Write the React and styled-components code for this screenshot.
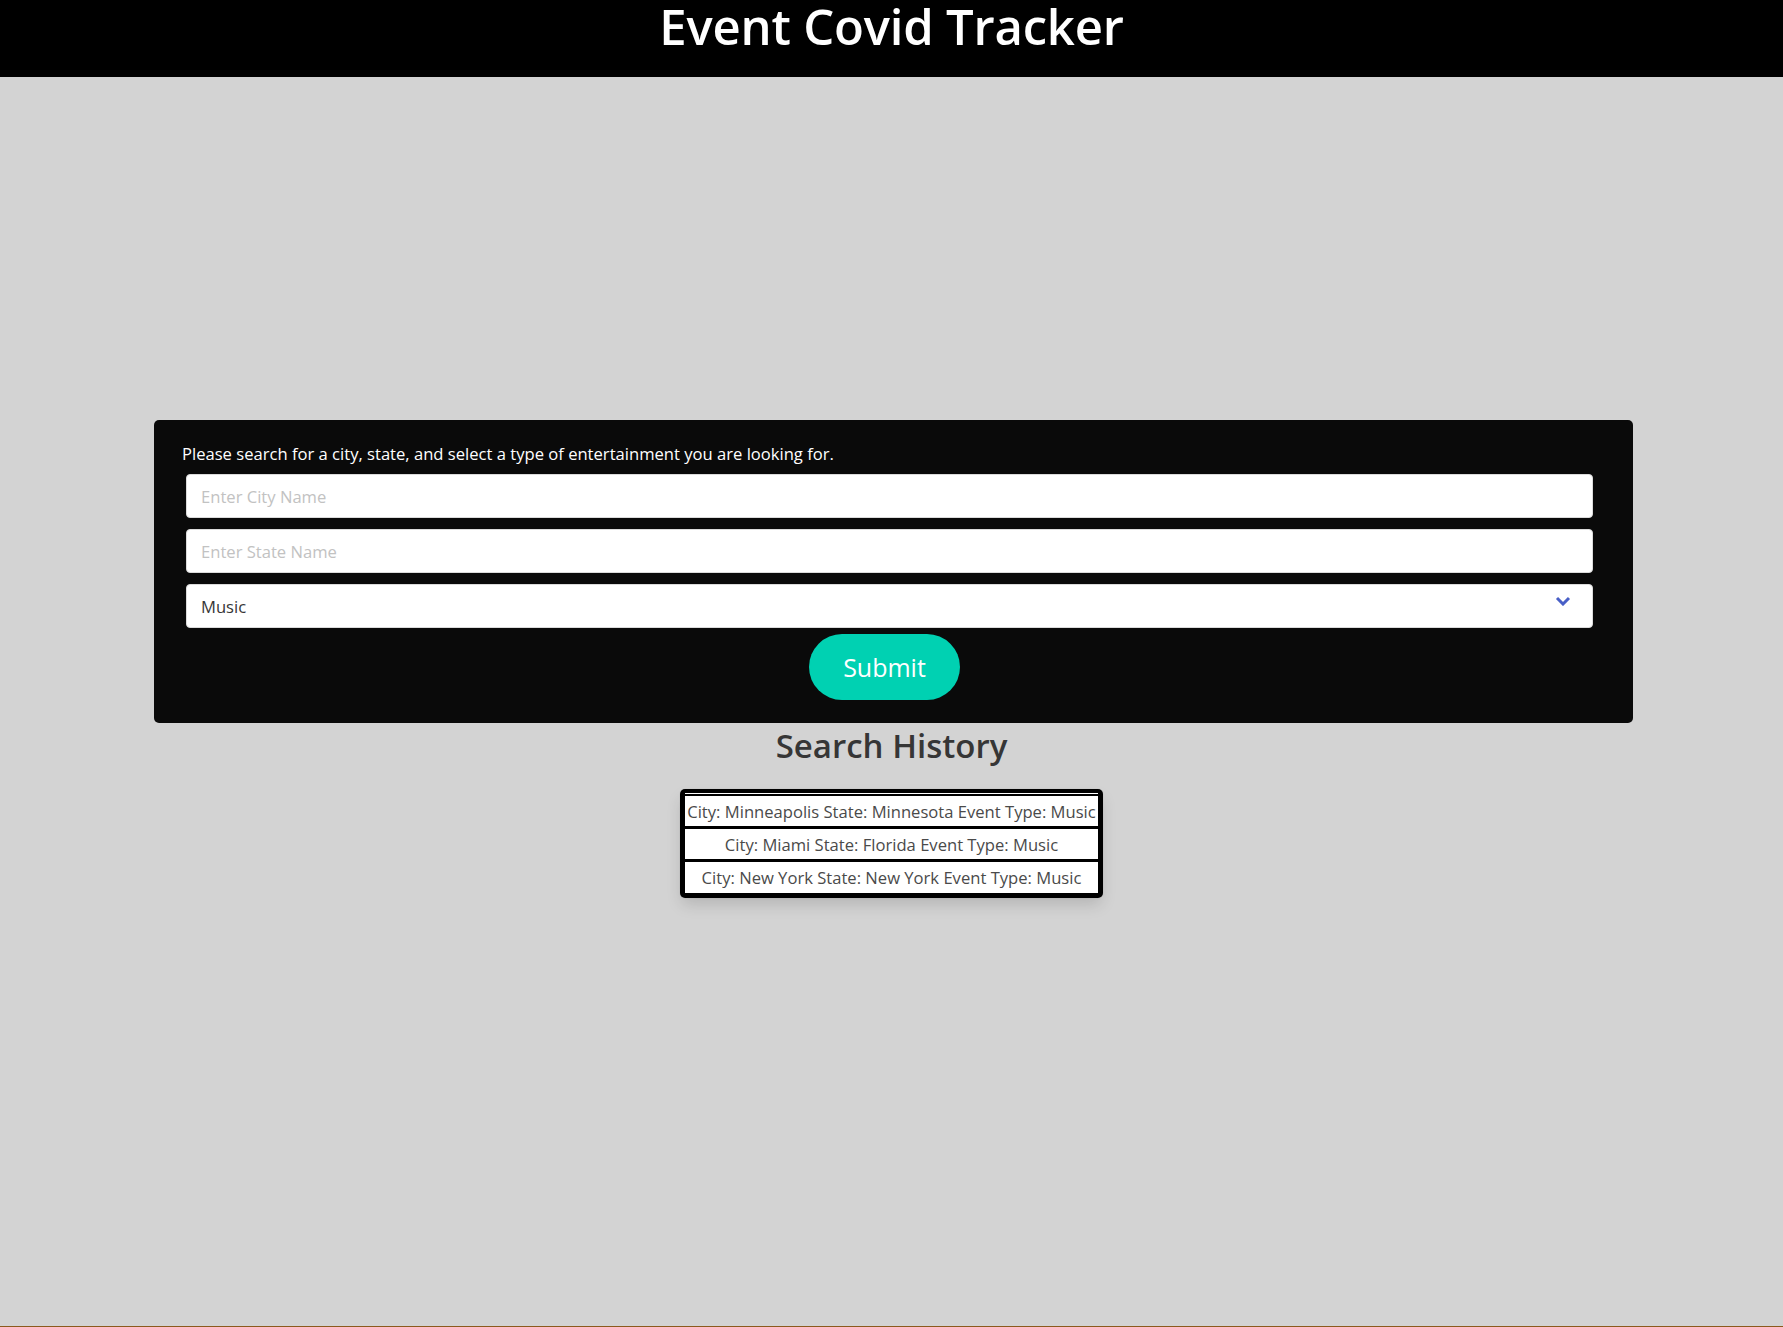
import React from "react";
import styled, { createGlobalStyle } from "styled-components";

const GlobalStyle = createGlobalStyle`
  html, body {
    margin: 0;
    padding: 0;
    background: #d3d3d3;
  }
  body {
    font-family: "Open Sans", "Noto Sans", sans-serif;
  }
  * {
    box-sizing: border-box;
  }
`;

const Page = styled.div`
  min-height: 100vh;
  display: flex;
  flex-direction: column;
  border-bottom: 1px solid #8b5a1c;
`;

const Header = styled.header`
  height: 77px;
  background: #000;
  display: flex;
  justify-content: center;
  overflow: hidden;
`;

const Title = styled.h1`
  margin: 0;
  color: #fff;
  font-size: 49px;
  font-weight: 600;
  line-height: 52px;
  letter-spacing: -0.2px;
`;

const Card = styled.form`
  width: 1479px;
  margin: 343px 0 0 154px;
  background: #0a0a0a;
  border-radius: 5px;
  padding: 19px 40px 23px 28px;
  display: flex;
  flex-direction: column;
`;

const Prompt = styled.p`
  margin: 0 0 5px;
  color: #fff;
  font-size: 16.6px;
  line-height: 30px;
`;

const Fields = styled.div`
  display: flex;
  flex-direction: column;
  gap: 11px;
  margin-left: 4px;
`;

const Input = styled.input`
  height: 44px;
  width: 100%;
  border: 1px solid #dbdbdb;
  border-radius: 4px;
  background: #fff;
  padding: 0 14px;
  font-family: inherit;
  font-size: 16.6px;
  color: #363636;
  outline: none;
  &::placeholder {
    color: #c2c2c2;
  }
`;

const SelectWrap = styled.div`
  position: relative;
  height: 44px;
`;

const Select = styled.select`
  appearance: none;
  height: 44px;
  width: 100%;
  border: 1px solid #dbdbdb;
  border-radius: 4px;
  background: #fff;
  padding: 0 14px;
  font-family: inherit;
  font-size: 16.6px;
  color: #363636;
  outline: none;
`;

const Arrow = styled.svg`
  position: absolute;
  right: 22px;
  top: 12px;
  pointer-events: none;
`;

const Submit = styled.button`
  align-self: center;
  margin: 6px 0 0 -6px;
  width: 151px;
  height: 66px;
  border: none;
  border-radius: 9999px;
  background: #00d1b2;
  color: #fff;
  font-family: inherit;
  font-size: 25px;
  cursor: pointer;
`;

const History = styled.section`
  display: flex;
  flex-direction: column;
  align-items: center;
`;

const HistoryTitle = styled.h2`
  margin: 1px 0 0;
  color: #363636;
  font-size: 33px;
  font-weight: 600;
  line-height: 44px;
`;

const List = styled.ul`
  list-style: none;
  margin: 21px 0 0;
  padding: 5px;
  background: #000;
  border-radius: 5px;
  display: flex;
  flex-direction: column;
  gap: 3px;
  box-shadow: 0 8px 16px -2px rgba(10, 10, 10, 0.15), 0 0 0 1px rgba(10, 10, 10, 0.02);
`;

const Row = styled.li`
  background: #fff;
  height: ${({ $h }) => $h}px;
  padding: 0 2px;
  display: flex;
  align-items: center;
  justify-content: center;
  color: #4a4a4a;
  font-size: 16.6px;
  white-space: nowrap;
  &:first-child {
    border-top: 2px solid #000;
    box-shadow: 0 -1px 0 #fff;
  }
`;

const history = [
  { city: "Minneapolis", state: "Minnesota", type: "Music", h: 32 },
  { city: "Miami", state: "Florida", type: "Music", h: 30 },
  { city: "New York", state: "New York", type: "Music", h: 31 },
];

const App = () => {
  return (
    <>
      <GlobalStyle />
      <Page>
        <Header>
          <Title>Event Covid Tracker</Title>
        </Header>
        <Card onSubmit={(e) => e.preventDefault()}>
          <Prompt>Please search for a city, state, and select a type of entertainment you are looking for.</Prompt>
          <Fields>
            <Input type="text" placeholder="Enter City Name" />
            <Input type="text" placeholder="Enter State Name" />
            <SelectWrap>
              <Select defaultValue="Music">
                <option>Music</option>
                <option>Sports</option>
                <option>Theater</option>
              </Select>
              <Arrow width="16" height="10" viewBox="0 0 16 10">
                <polyline points="2,2 8,8 14,2" fill="none" stroke="#485fc7" strokeWidth="3" />
              </Arrow>
            </SelectWrap>
          </Fields>
          <Submit type="submit">Submit</Submit>
        </Card>
        <History>
          <HistoryTitle>Search History</HistoryTitle>
          <List>
            {history.map((item) => (
              <Row key={item.city} $h={item.h}>
                City: {item.city} State: {item.state} Event Type: {item.type}
              </Row>
            ))}
          </List>
        </History>
      </Page>
    </>
  );
};

export default App;
